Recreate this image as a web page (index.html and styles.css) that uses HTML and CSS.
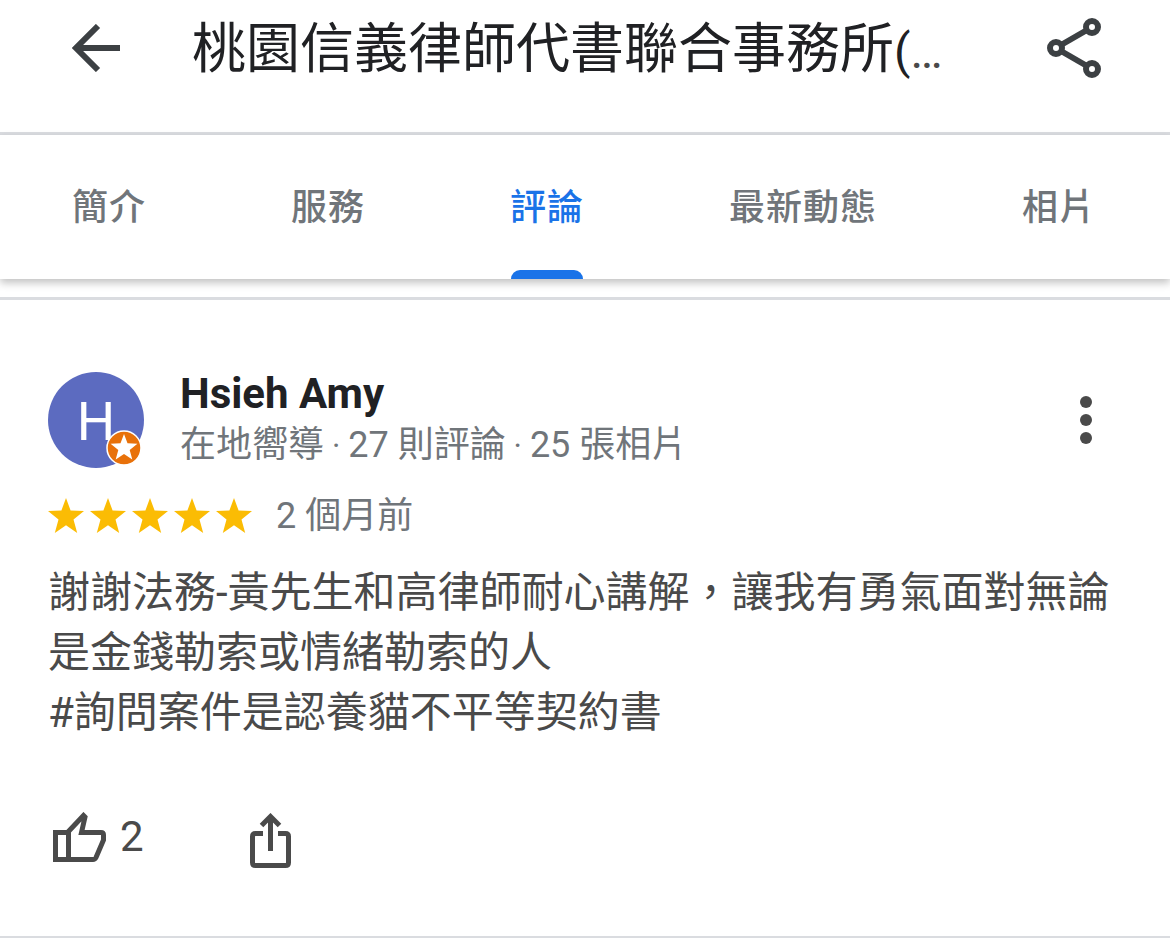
FILE: index.html
```html
<!DOCTYPE html>
<html lang="zh-Hant-TW">
<head>
<meta charset="utf-8">
<meta name="viewport" content="width=device-width, initial-scale=1">
<title>桃園信義律師代書聯合事務所</title>
<link rel="stylesheet" href="styles.css">
</head>
<body>
<header class="topbar">
  <button class="icon-button" type="button" aria-label="返回">
    <svg width="48" height="48" viewBox="0 0 48 48" fill="none" stroke="#3c4043" stroke-width="6"><path d="M48 24H5M26 2 4 24l22 22"/></svg>
  </button>
  <h1 class="topbar-title">桃園信義律師代書聯合事務所<span class="title-tail">(<span class="more">…</span></span></h1>
  <button class="icon-button" type="button" aria-label="分享">
    <svg width="54" height="60" viewBox="0 0 54 60" fill="none" stroke="#3c4043" stroke-width="6"><circle cx="45" cy="9" r="6"/><circle cx="9" cy="30" r="6"/><circle cx="45" cy="51" r="6"/><path d="M14 27 40 12M14 33l26 15"/></svg>
  </button>
</header>
<nav class="tabs">
  <a class="tab" href="#about">簡介</a>
  <a class="tab" href="#services">服務</a>
  <a class="tab tab-active" href="#reviews" aria-current="page">評論</a>
  <a class="tab" href="#updates">最新動態</a>
  <a class="tab" href="#photos">相片</a>
</nav>
<main class="reviews" id="reviews">
  <article class="review">
    <div class="author">
      <div class="avatar">H
        <svg class="badge" width="36" height="36" viewBox="0 0 36 36"><circle cx="18" cy="18" r="17" fill="#e8710a" stroke="#fff" stroke-width="1.500"/><path fill="#fff" d="m18 4 3.500 9.300 9.900.500-7.700 6.200 2.600 9.600-8.300-5.500-8.300 5.500 2.600-9.600-7.700-6.200 9.900-.500z"/></svg>
      </div>
      <div class="author-text">
        <h2 class="author-name">Hsieh Amy</h2>
        <p class="author-meta">在地嚮導<span class="dot"> · </span>27 則評論<span class="dot"> · </span>25 張相片</p>
      </div>
      <button class="icon-button menu" type="button" aria-label="更多選項">
        <svg width="12" height="48" viewBox="0 0 12 48" fill="#4a4a4a"><circle cx="6" cy="6" r="6"/><circle cx="6" cy="24" r="6"/><circle cx="6" cy="42" r="6"/></svg>
      </button>
    </div>
    <div class="rating">
      <svg width="204" height="36" viewBox="0 0 204 36" fill="#fbbc04" role="img" aria-label="5 顆星"><defs><path id="star" d="m18 0 4.600 12.500L36 13 25.500 21.500 29.200 35 18 27.300 6.800 35l3.700-13.500L0 13l13.400-.500z"/></defs><use href="#star"/><use href="#star" x="42"/><use href="#star" x="84"/><use href="#star" x="126"/><use href="#star" x="168"/></svg>
      <span class="date">2 個月前</span>
    </div>
    <p class="review-text">謝謝法務-黃先生和高律師耐心講解，讓我有勇氣面對無論是金錢勒索或情緒勒索的人<br>#詢問案件是認養貓不平等契約書</p>
    <div class="actions">
      <button class="icon-button like" type="button" aria-label="讚 2">
        <svg width="54" height="50" viewBox="0 0 54 50" fill="none" stroke="#4a4a4a" stroke-width="5"><path d="M2.500 20.500h12L30.500 3.500l1.500 1.500-3.500 15.500H48q2.500 0 2.500 2.500v5L43 45.500q-1 2-3 2H2.500zM15.500 20v28"/></svg>
        <span>2</span>
      </button>
      <button class="icon-button" type="button" aria-label="分享評論">
        <svg width="42" height="56" viewBox="0 0 42 56" fill="none" stroke="#4a4a4a" stroke-width="5"><path d="M13 20.500H5.500q-3 0-3 3v26q0 3 3 3h30q3 0 3-3v-26q0-3-3-3H28M20.500 38V4M11.500 12.500l9-9 9 9"/></svg>
      </button>
    </div>
  </article>
</main>
</body>
</html>
```
FILE: styles.css
```css
* { box-sizing: border-box; }

body {
  margin: 0;
  background: #fff;
  color: #202124;
  font-family: Roboto, "Noto Sans CJK TC", sans-serif;
}

h1, h2, p { margin: 0; }

.icon-button {
  display: flex;
  align-items: center;
  padding: 0;
  border: 0;
  background: none;
  color: #4a4a4a;
  font: inherit;
}

.icon-button svg { display: block; }

.topbar {
  display: flex;
  align-items: center;
  gap: 72px;
  height: 135px;
  padding: 0 69px 36px 72px;
  border-bottom: 3px solid #dadce0;
}

.topbar-title {
  flex: 1;
  padding-top: 6px;
  font-size: 54px;
  font-weight: 400;
  line-height: 72px;
  white-space: nowrap;
}

.title-tail { font-size: 48px; }

.more { color: #4a4a4a; }

.tabs {
  display: flex;
  justify-content: space-between;
  height: 144px;
  padding: 0 74px 0 72px;
  box-shadow: 0 4px 8px rgba(0, 0, 0, 0.24);
}

.tab {
  position: relative;
  height: 144px;
  padding-top: 1px;
  color: #70757a;
  font-size: 36px;
  font-weight: 500;
  letter-spacing: 1px;
  line-height: 144px;
  text-decoration: none;
}

.tab-active { color: #1a73e8; }

.tab-active::after {
  content: "";
  position: absolute;
  right: 1px;
  bottom: 0;
  left: 1px;
  height: 9px;
  border-radius: 9px 9px 0 0;
  background: #1a73e8;
}

.reviews {
  margin-top: 18px;
  border-top: 3px solid #dadce0;
}

.review {
  padding: 72px 48px 66px;
  border-bottom: 2px solid #dadce0;
}

.author {
  display: flex;
  align-items: flex-start;
  gap: 36px;
  padding-right: 30px;
}

.avatar {
  position: relative;
  width: 96px;
  height: 96px;
  border-radius: 50%;
  background: #5c6bc0;
  color: #fff;
  font-size: 54px;
  line-height: 100px;
  text-align: center;
}

.badge {
  position: absolute;
  right: 2px;
  bottom: 2px;
}

.author-text { flex: 1; }

.author-name {
  margin-bottom: 4px;
  font-size: 42px;
  font-weight: 700;
  line-height: 44px;
}

.author-meta {
  height: 50px;
}

.author-meta, .date {
  color: #70757a;
  font-size: 36px;
  line-height: 50px;
}

.dot { font-size: 32px; }

.menu { margin-top: 24px; }

.rating {
  display: flex;
  align-items: center;
  gap: 24px;
  margin-top: 21px;
}

.review-text {
  margin-top: 22px;
  color: #4a4a4a;
  font-size: 42px;
  line-height: 60px;
}

.actions {
  display: flex;
  align-items: center;
  gap: 106px;
  margin-top: 69px;
  padding-left: 5px;
}

.like {
  gap: 13px;
  padding-bottom: 8px;
  font-size: 42px;
  line-height: 48px;
}
```
